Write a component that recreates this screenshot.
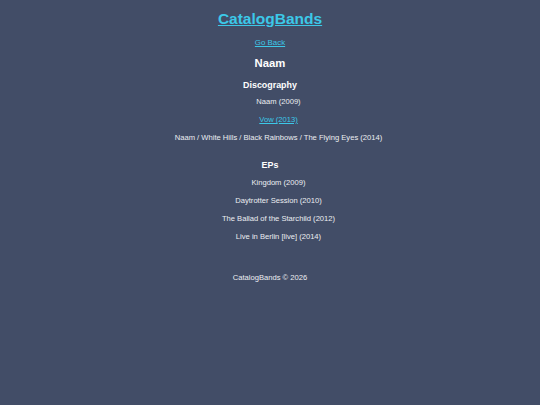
export default function App() {
  const albums = [
    { title: "Naam (2009)" },
    { title: "Vow (2013)", link: true },
    { title: "Naam / White Hills / Black Rainbows / The Flying Eyes (2014)" },
  ];
  const eps = [
    "Kingdom (2009)",
    "Daytrotter Session (2010)",
    "The Ballad of the Starchild (2012)",
    "Live in Berlin [live] (2014)",
  ];
  return (
    <div
      className="min-h-[405px] w-full bg-[#424d67] text-center text-[#eceef2]"
      style={{ fontFamily: '"Liberation Sans", Arial, sans-serif' }}
    >
      <div className="pt-[9px]">
        <a href="#" className="block text-[15.5px] font-bold leading-[20px] text-[#3cc8e8] underline">
          CatalogBands
        </a>
        <a href="#" className="mt-[6px] block text-[7.9px] leading-[16px] text-[#3cc8e8] underline">
          Go Back
        </a>
        <h2 className="mt-[3px] text-[11.3px] font-bold leading-[18px] text-white">Naam</h2>
        <h3 className="mt-[5px] text-[8.9px] font-bold leading-[16px] text-white">Discography</h3>
        <ul className="pl-[17px]">
          {albums.map((a) =>
            a.link ? (
              <li key={a.title} className="text-[7.6px] leading-[18px]">
                <a href="#" className="text-[#3cc8e8] underline">
                  {a.title}
                </a>
              </li>
            ) : (
              <li key={a.title} className="text-[7.6px] leading-[18px]">
                {a.title}
              </li>
            )
          )}
        </ul>
        <h3 className="mt-[9px] text-[8.9px] font-bold leading-[18px] text-white">EPs</h3>
        <ul className="pl-[17px]">
          {eps.map((e) => (
            <li key={e} className="text-[7.6px] leading-[18px]">
              {e}
            </li>
          ))}
        </ul>
        <footer className="mt-[23px] text-[7.6px] leading-[18px]">CatalogBands © 2026</footer>
      </div>
    </div>
  );
}
